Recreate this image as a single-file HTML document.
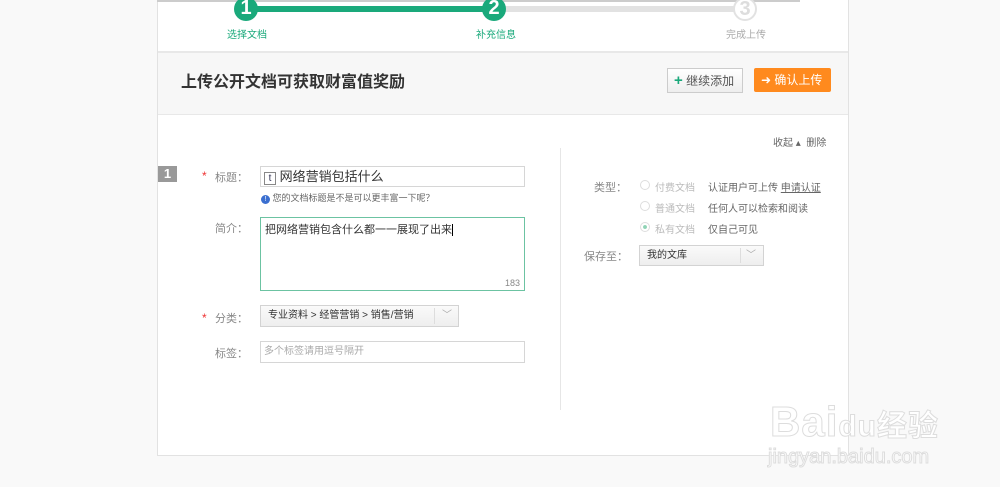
<!DOCTYPE html>
<html><head><meta charset="utf-8"><style>
*{margin:0;padding:0;box-sizing:border-box}
body{width:1000px;height:487px;background:#f9f9f9;font-family:"Liberation Sans","Noto Sans CJK SC",sans-serif;position:relative;overflow:hidden;font-size:12px;color:#333}
.a{position:absolute}
.card{left:157px;top:0;width:692px;height:456px;background:#fff;border:1px solid #e2e2e2;border-top:none}
.circ{width:24px;height:24px;border-radius:50%;color:#fff;font-size:20px;font-weight:bold;text-align:center;line-height:22px}
.inp{border:1px solid #d6d6d6;background:#fff}
.lbl{color:#888;font-size:11px}
.red{color:#e33;font-size:12px}
.sm{font-size:10px;color:#999}
</style></head><body>
<div class="a card"></div>
<div class="a" style="left:157px;top:0;width:643px;height:2px;background:#ccc"></div>
<!-- steps -->
<div class="a" style="left:246px;top:6px;width:248px;height:6px;background:#1aa97b"></div>
<div class="a" style="left:494px;top:6px;width:250px;height:6px;background:#e2e2e2"></div>
<div class="a circ" style="left:234px;top:-3px;background:#1aa97b">1</div>
<div class="a circ" style="left:482px;top:-3px;background:#1aa97b">2</div>
<div class="a circ" style="left:733px;top:-3px;background:#fff;border:2px solid #e2e2e2;color:#ddd;line-height:20px">3</div>
<div class="a" style="left:227px;top:26px;font-size:10px;color:#1aa97b">选择文档</div>
<div class="a" style="left:476px;top:26px;font-size:10px;color:#1aa97b">补充信息</div>
<div class="a" style="left:726px;top:26px;font-size:10px;color:#aaa">完成上传</div>
<!-- header band -->
<div class="a" style="left:158px;top:51px;width:690px;height:64px;background:#f7f7f7;border-top:2px solid #e8e8e8;border-bottom:1px solid #e8e8e8"></div>
<div class="a" style="left:181px;top:68px;font-size:16px;font-weight:bold;color:#333">上传公开文档可获取财富值奖励</div>
<div class="a" style="left:667px;top:68px;width:76px;height:25px;border:1px solid #ccc;background:linear-gradient(#fff,#eee);font-size:12px;color:#555;line-height:23px;padding-left:6px"><span style="color:#1aa97b;font-size:15px;font-weight:bold">+</span> 继续添加</div>
<div class="a" style="left:754px;top:68px;width:77px;height:24px;background:#ff8a1e;color:#fff;font-size:12px;line-height:24px;padding-left:7px;border-radius:2px">➜ 确认上传</div>
<!-- right tools -->
<div class="a sm" style="left:773px;top:134px;color:#666">收起 ▴ &nbsp;删除</div>
<div class="a" style="left:560px;top:148px;width:1px;height:262px;background:#e6e6e6"></div>
<!-- left form -->
<div class="a" style="left:158px;top:166px;width:19px;height:16px;background:#999;color:#fff;font-weight:bold;font-size:13px;text-align:center;line-height:16px">1</div>
<div class="a red" style="left:202px;top:169px">*</div>
<div class="a lbl" style="left:215px;top:169px">标题：</div>
<div class="a inp" style="left:260px;top:166px;width:265px;height:21px;font-size:13px;line-height:19px;padding-left:3px"><span style="display:inline-block;border:1px solid #888;font-size:10px;width:12px;height:13px;line-height:11px;text-align:center;color:#335">t</span> 网络营销包括什么</div>
<div class="a sm" style="left:261px;top:191px;color:#666;font-size:9px"><span style="display:inline-block;width:9px;height:9px;border-radius:50%;background:#3b6fd0;color:#fff;font-size:7px;text-align:center;line-height:9px">!</span> 您的文档标题是不是可以更丰富一下呢？</div>
<div class="a lbl" style="left:215px;top:220px">简介：</div>
<div class="a" style="left:260px;top:217px;width:265px;height:74px;border:1px solid #6cc3a2;font-size:11px;padding:3px 4px">把网络营销包含什么都一一展现了出来<span style="border-left:1px solid #000"></span></div>
<div class="a sm" style="left:505px;top:278px;font-size:9px;color:#888">183</div>
<div class="a red" style="left:202px;top:311px">*</div>
<div class="a lbl" style="left:215px;top:310px">分类：</div>
<div class="a" style="left:260px;top:305px;width:199px;height:22px;border:1px solid #d3d3d3;background:linear-gradient(#fafafa,#eee);font-size:10px;line-height:20px;padding-left:7px;color:#333">专业资料 &gt; 经管营销 &gt; 销售/营销<span style="position:absolute;left:173px;top:2px;height:16px;border-left:1px solid #ddd"></span><span style="position:absolute;left:181px;top:0;color:#aaa">﹀</span></div>
<div class="a lbl" style="left:215px;top:345px">标签：</div>
<div class="a inp" style="left:260px;top:341px;width:265px;height:22px;font-size:10px;color:#aaa;line-height:20px;padding-left:3px">多个标签请用逗号隔开</div>
<!-- right form -->
<div class="a lbl" style="left:594px;top:179px">类型：</div>
<div class="a" style="left:640px;top:180px;width:10px;height:10px;border:1px solid #ddd;border-radius:50%"></div>
<div class="a sm" style="left:655px;top:179px;color:#bbb">付费文档</div>
<div class="a sm" style="left:708px;top:179px;color:#666">认证用户可上传 <u>申请认证</u></div>
<div class="a" style="left:640px;top:201px;width:10px;height:10px;border:1px solid #ddd;border-radius:50%"></div>
<div class="a sm" style="left:655px;top:200px;color:#bbb">普通文档</div>
<div class="a sm" style="left:708px;top:200px;color:#666">任何人可以检索和阅读</div>
<div class="a" style="left:640px;top:222px;width:10px;height:10px;border:1px solid #ddd;border-radius:50%;background:radial-gradient(#8fd3b5 30%,#fff 40%)"></div>
<div class="a sm" style="left:655px;top:221px;color:#bbb">私有文档</div>
<div class="a sm" style="left:708px;top:221px;color:#666">仅自己可见</div>
<div class="a lbl" style="left:584px;top:248px">保存至：</div>
<div class="a" style="left:639px;top:245px;width:125px;height:21px;border:1px solid #d3d3d3;background:linear-gradient(#fafafa,#eee);font-size:10px;line-height:19px;padding-left:7px">我的文库<span style="position:absolute;left:100px;top:2px;height:15px;border-left:1px solid #ddd"></span><span style="position:absolute;left:106px;top:0;color:#aaa">﹀</span></div>
<!-- watermark -->
<div class="a" style="left:770px;top:398px;font-size:42px;font-weight:bold;color:#fff;-webkit-text-stroke:1px #ddd;letter-spacing:1px">Bai<span style="font-size:30px">du</span><span style="font-size:30px;font-family:'Noto Sans CJK SC',sans-serif">经验</span></div>
<div class="a" style="left:768px;top:446px;font-size:20px;color:#fff;-webkit-text-stroke:1px #ddd">jingyan.baidu.com</div>
</body></html>
